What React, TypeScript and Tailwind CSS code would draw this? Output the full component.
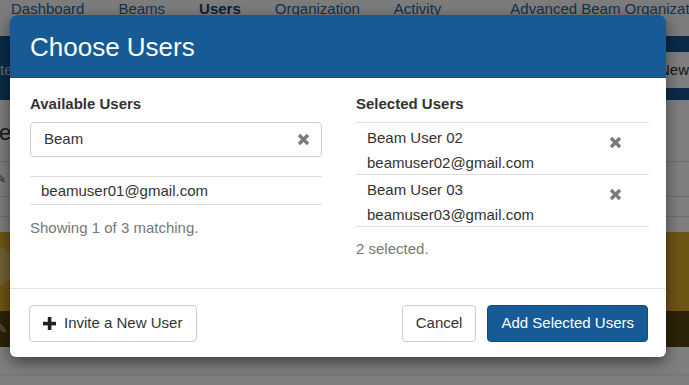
import React from "react"

const RemoveIcon = () => (
  <svg width="13" height="13" viewBox="0 0 13 13" className="block">
    <path d="M2 2 L11 11 M11 2 L2 11" stroke="#7b7b7b" strokeWidth="3.4" strokeLinecap="butt" />
  </svg>
)

const PlusIcon = () => (
  <svg width="13" height="13" viewBox="0 0 13 13" className="block">
    <rect x="4.8" y="0" width="3.6" height="13" fill="#222" />
    <rect x="0" y="4.8" width="13" height="3.6" fill="#222" />
  </svg>
)

const selected = [
  { name: "Beam User 02", email: "beamuser02@gmail.com" },
  { name: "Beam User 03", email: "beamuser03@gmail.com" },
]

function BackgroundPage() {
  return (
    <div className="w-[689px] bg-white">
      {/* top nav */}
      <div className="flex h-[36px] items-start gap-[34px] bg-[#f8f8f8] pl-[11px] text-[15px] leading-[18px] text-[#2f5f97] whitespace-nowrap">
        <span>Dashboard</span>
        <span>Beams</span>
        <span className="font-bold text-[#1c406d]">Users</span>
        <span>Organization</span>
        <span>Activity</span>
        <span className="ml-[35px]">Advanced Beam Organization</span>
      </div>
      {/* blue band */}
      <div className="flex h-[64px] items-start justify-between bg-[#17548f] pt-[16px]">
        <span className="mt-[9px] text-[15px] leading-[18px] text-[#d0d0d0]">te</span>
        <span className="flex h-[36px] w-[40px] items-center rounded-l-[4px] bg-white pl-[10px] text-[15px] text-[#333]">
          New
        </span>
      </div>
      {/* content */}
      <div className="h-[62px] border-b border-[#ddd] pt-[20px] text-[22px] leading-[26px] text-[#333]">
        <span className="-ml-[1px]">ev</span>
      </div>
      <div className="flex h-[35px] items-center gap-[4px] border-b border-[#ddd] text-[15px] text-[#333]">
        <span className="-ml-[4px] text-[12px]">✎</span>
        <span>E</span>
      </div>
      <div className="h-[20px] border-b border-[#ddd]" />
      <div className="mt-[15px] h-[79px] bg-[#dcaa26] pt-[14px]">
        <div className="-ml-[26px] h-[40px] w-[40px] rounded-full bg-[#e6c36a]" />
      </div>
      <div className="flex h-[36px] items-center gap-[6px] bg-[#5a4712]">
        <span className="-ml-[3px] text-[12px] text-[#ddd]">✎</span>
        <span className="h-[17px] w-[10px] rounded-[5px] bg-[#8a8a8a]" />
      </div>
      <div className="h-[29px] border-b-[3px] border-[#f2f2f2] bg-white" />
    </div>
  )
}

export default function App() {
  return (
    <div className="relative h-[385px] w-[689px] overflow-hidden font-['Liberation_Sans',Arial,sans-serif]">
      <BackgroundPage />
      <div className="absolute inset-0 bg-black/50" />

      {/* modal */}
      <div className="absolute left-[10px] top-[15px] w-[656px] overflow-hidden rounded-[6px] bg-white shadow-[0_5px_15px_rgba(0,0,0,0.5)]">
        <div className="flex h-[63px] items-center border-b border-[#124c82] bg-[#165a96] pl-[20px] pt-[1px]">
          <h2 className="text-[26px] leading-[30px] text-white">Choose Users</h2>
        </div>

        <div className="grid h-[210px] grid-cols-[292px_293px] gap-x-[34px] pl-[20px] pr-[17px] pt-[16px] text-[15px] text-[#333]">
          {/* available users */}
          <div>
            <div className="mb-[8px] text-[15px] font-bold leading-[20px]">Available Users</div>
            <div className="flex h-[35px] items-center justify-between rounded-[4px] border border-[#ccc] pl-[13px] pr-[11px]">
              <span>Beam</span>
              <RemoveIcon />
            </div>
            <div className="mt-[19px] h-[29px] border-y border-[#ddd] pl-[11px] leading-[27px]">
              beamuser01@gmail.com
            </div>
            <div className="mt-[13px] leading-[20px] text-[#777]">Showing 1 of 3 matching.</div>
          </div>

          {/* selected users */}
          <div>
            <div className="mb-[8px] text-[15px] font-bold leading-[20px]">Selected Users</div>
            <div className="border-b border-[#ddd]">
              {selected.map((u) => (
                <div key={u.email} className="flex h-[52px] items-start justify-between border-t border-[#ddd] pl-[11px] pr-[27px] pt-[2px]">
                  <div className="leading-[25px]">
                    <div>{u.name}</div>
                    <div>{u.email}</div>
                  </div>
                  <div className="pt-[11px]">
                    <RemoveIcon />
                  </div>
                </div>
              ))}
            </div>
            <div className="mt-[12px] leading-[20px] text-[#777]">2 selected.</div>
          </div>
        </div>

        <div className="flex items-center justify-between border-t border-[#e5e5e5] pb-[15px] pl-[19px] pr-[18px] pt-[16px] text-[15px]">
          <button className="flex h-[37px] items-center gap-[8px] rounded-[4px] border border-[#ccc] bg-white pl-[13px] pr-[14px] text-[#333]">
            <PlusIcon />
            Invite a New User
          </button>
          <div className="flex gap-[11px]">
            <button className="h-[37px] rounded-[4px] border border-[#ccc] bg-white px-[13px] text-[#333]">Cancel</button>
            <button className="h-[37px] rounded-[4px] border border-[#124c82] bg-[#165a96] px-[13px] text-white">
              Add Selected Users
            </button>
          </div>
        </div>
      </div>
    </div>
  )
}
